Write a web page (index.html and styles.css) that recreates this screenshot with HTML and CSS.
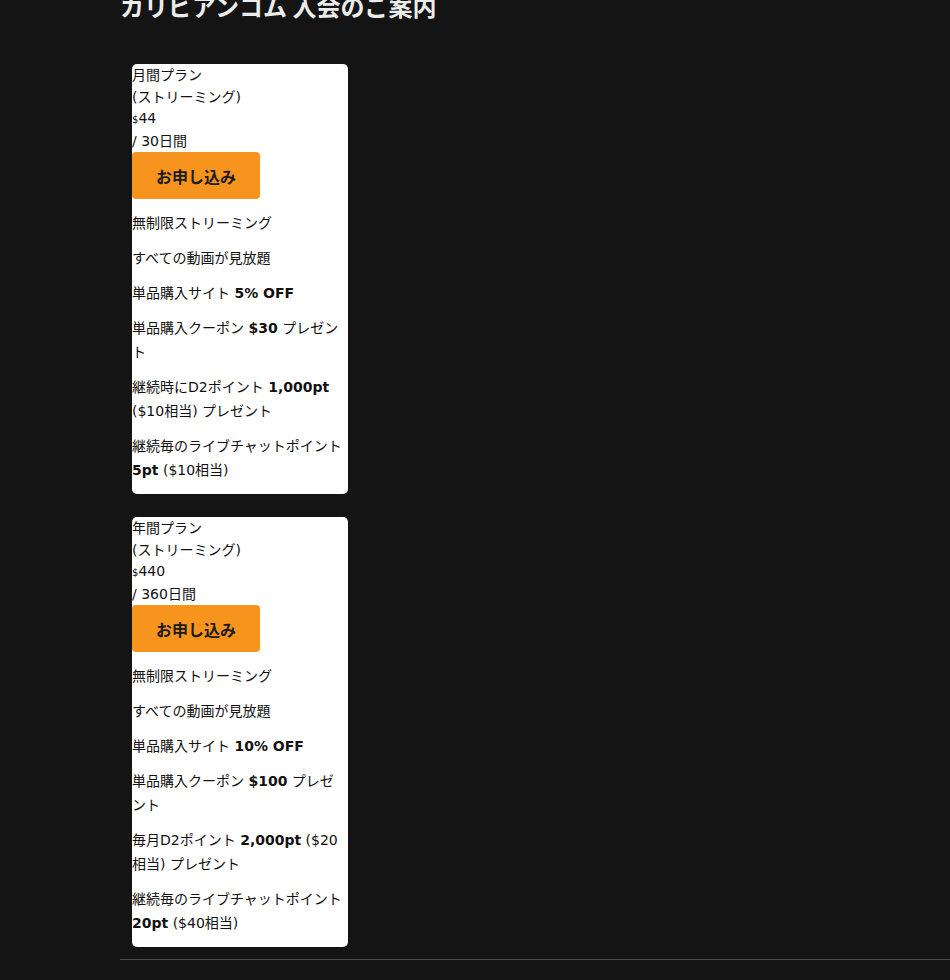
FILE: index.html
```html
<!DOCTYPE html>
<html lang="ja">
<head>
    <meta charset="UTF-8">
    <meta name="viewport" content="width=device-width, initial-scale=1.0">
    <title>カリビアンコム 入会のご案内</title>
    <link rel="stylesheet" href="styles.css">
</head>
<body>
    <div class="container">
        <h1 class="page-title">カリビアンコム 入会のご案内</h1>

        <div class="plans">
            <!-- 月間プラン -->
            <div class="plan">
                <div class="plan-name">月間プラン</div>
                <div class="plan-type">(ストリーミング)</div>
                <div class="plan-price"><span class="currency">$</span>44</div>
                <div class="plan-period">/ 30日間</div>
                <a class="join-button" href="#">お申し込み</a>
                <ul class="features">
                    <li>無制限ストリーミング</li>
                    <li>すべての動画が見放題</li>
                    <li>単品購入サイト <b>5% OFF</b></li>
                    <li>単品購入クーポン <b>$30</b> プレゼント</li>
                    <li>継続時にD2ポイント <b>1,000pt</b> ($10相当) プレゼント</li>
                    <li>継続毎のライブチャットポイント <b>5pt</b> ($10相当)</li>
                </ul>
            </div>

            <!-- 年間プラン -->
            <div class="plan">
                <div class="plan-name">年間プラン</div>
                <div class="plan-type">(ストリーミング)</div>
                <div class="plan-price"><span class="currency">$</span>440</div>
                <div class="plan-period">/ 360日間</div>
                <a class="join-button" href="#">お申し込み</a>
                <ul class="features">
                    <li>無制限ストリーミング</li>
                    <li>すべての動画が見放題</li>
                    <li>単品購入サイト <b>10% OFF</b></li>
                    <li>単品購入クーポン <b>$100</b> プレゼント</li>
                    <li>毎月D2ポイント <b>2,000pt</b> ($20相当) プレゼント</li>
                    <li>継続毎のライブチャットポイント <b>20pt</b> ($40相当)</li>
                </ul>
            </div>
        </div>

        <hr class="divider">
    </div>
</body>
</html>
```

FILE: styles.css
```css
/* 全体 */
body {
    margin: 0;
    background-color: #141414;
    font-family: "DejaVu Sans", "Noto Sans CJK JP", sans-serif;
    color: #111;
    overflow: hidden;
}

.container {
    margin-left: 120px;
}

.page-title {
    margin: -6px 0 0;
    font-family: "Noto Sans CJK JP", sans-serif;
    font-size: 24px;
    line-height: 24px;
    font-weight: bold;
    color: #ececec;
}

/* プラン一覧 */
.plans {
    display: flex;
    flex-direction: column;
    gap: 23px;
    padding: 46px 0 0 12px;
}

.plan {
    width: 212px;
    padding-right: 4px;
    background: #fff;
    border-radius: 5px;
    font-size: 14px;
    line-height: 22px;
}

.plan-name {
    height: 22px;
}

.plan-type {
    height: 21px;
}

.plan-price {
    height: 22px;
}

.plan-period {
    height: 23px;
    line-height: 25px;
}

.currency {
    font-size: 10px;
    line-height: 1;
}

/* 申し込みボタン */
.join-button {
    display: flex;
    align-items: center;
    justify-content: center;
    width: 128px;
    height: 47px;
    background: #f7941e;
    border-radius: 4px;
    color: #1c1c1c;
    font-family: "Noto Sans CJK JP", sans-serif;
    font-size: 16px;
    font-weight: bold;
    text-decoration: none;
}

/* 特典リスト */
.features {
    list-style: none;
    margin: 0;
    padding: 12px 0;
    display: flex;
    flex-direction: column;
    gap: 11px;
    line-height: 24px;
}

.features b {
    font-weight: bold;
}

.divider {
    margin: 12px 0 0;
    border: none;
    border-top: 1px solid #4a4a4a;
}
```
